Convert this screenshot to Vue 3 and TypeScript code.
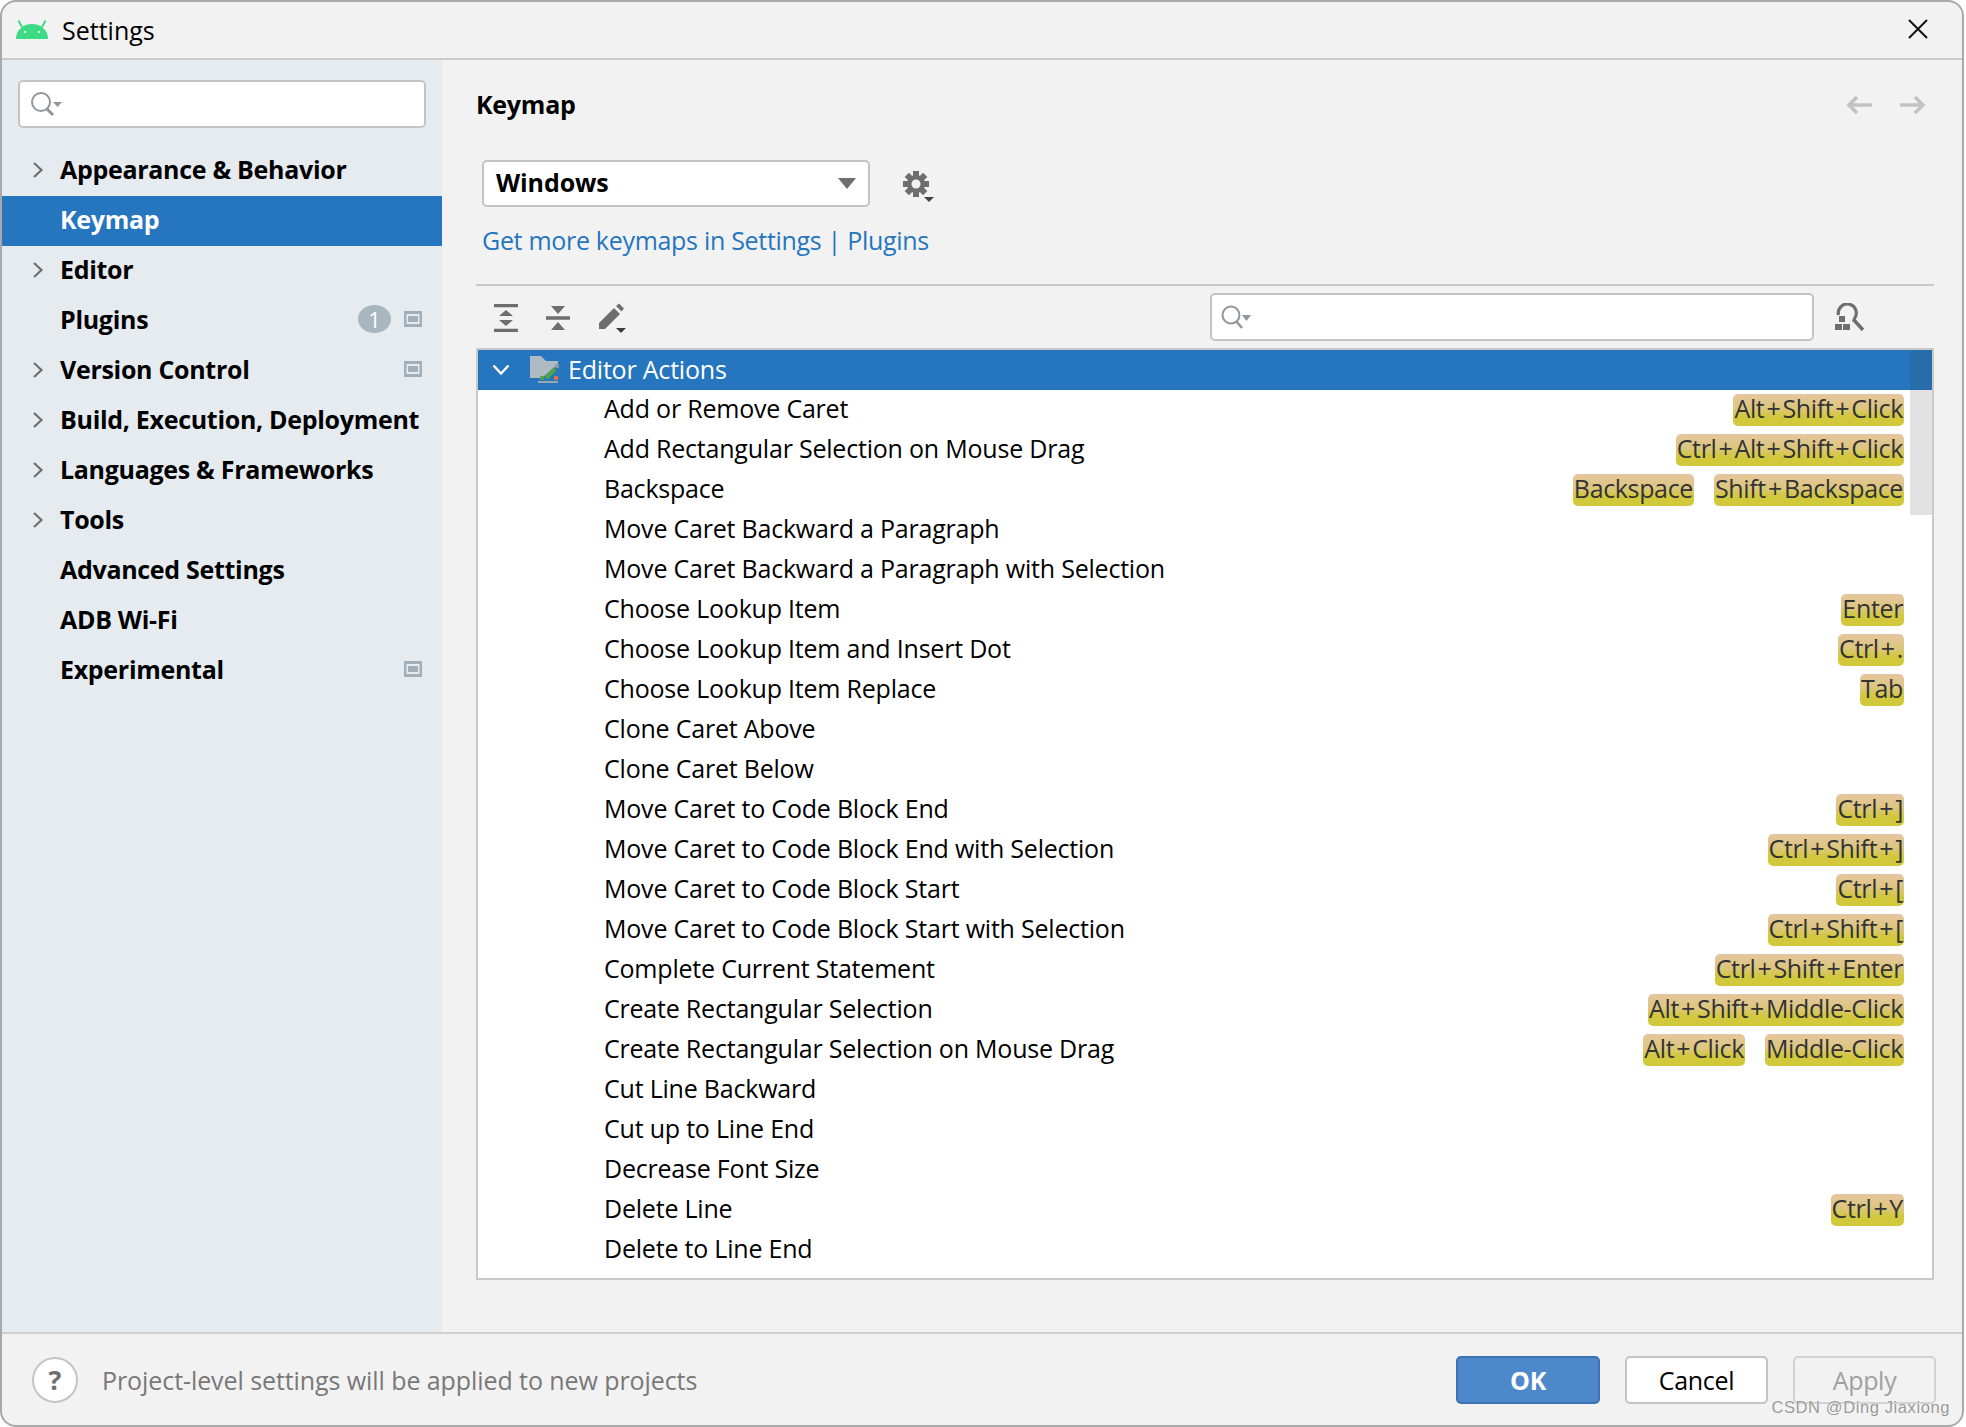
<script setup lang="ts">
interface Nav { label: string; arrow?: boolean; active?: boolean; badge?: boolean; proj?: boolean }
const nav: Nav[] = [
  { label: 'Appearance & Behavior', arrow: true },
  { label: 'Keymap', active: true },
  { label: 'Editor', arrow: true },
  { label: 'Plugins', badge: true, proj: true },
  { label: 'Version Control', arrow: true, proj: true },
  { label: 'Build, Execution, Deployment', arrow: true },
  { label: 'Languages & Frameworks', arrow: true },
  { label: 'Tools', arrow: true },
  { label: 'Advanced Settings' },
  { label: 'ADB Wi-Fi' },
  { label: 'Experimental', proj: true },
]
const rows: { name: string; keys: string[] }[] = [
  { name: 'Add or Remove Caret', keys: ['Alt+Shift+Click'] },
  { name: 'Add Rectangular Selection on Mouse Drag', keys: ['Ctrl+Alt+Shift+Click'] },
  { name: 'Backspace', keys: ['Backspace', 'Shift+Backspace'] },
  { name: 'Move Caret Backward a Paragraph', keys: [] },
  { name: 'Move Caret Backward a Paragraph with Selection', keys: [] },
  { name: 'Choose Lookup Item', keys: ['Enter'] },
  { name: 'Choose Lookup Item and Insert Dot', keys: ['Ctrl+.'] },
  { name: 'Choose Lookup Item Replace', keys: ['Tab'] },
  { name: 'Clone Caret Above', keys: [] },
  { name: 'Clone Caret Below', keys: [] },
  { name: 'Move Caret to Code Block End', keys: ['Ctrl+]'] },
  { name: 'Move Caret to Code Block End with Selection', keys: ['Ctrl+Shift+]'] },
  { name: 'Move Caret to Code Block Start', keys: ['Ctrl+['] },
  { name: 'Move Caret to Code Block Start with Selection', keys: ['Ctrl+Shift+['] },
  { name: 'Complete Current Statement', keys: ['Ctrl+Shift+Enter'] },
  { name: 'Create Rectangular Selection', keys: ['Alt+Shift+Middle-Click'] },
  { name: 'Create Rectangular Selection on Mouse Drag', keys: ['Alt+Click', 'Middle-Click'] },
  { name: 'Cut Line Backward', keys: [] },
  { name: 'Cut up to Line End', keys: [] },
  { name: 'Decrease Font Size', keys: [] },
  { name: 'Delete Line', keys: ['Ctrl+Y'] },
  { name: 'Delete to Line End', keys: [] },
]
const parts = (k: string): string[] => k.split(/(\+)/)
</script>

<template>
  <div class="window">
    <header class="titlebar">
      <svg class="android" width="32" height="22" viewBox="0 0 32 22">
        <path d="M0 21C0 12 7 6 16 6s16 6 16 15z" fill="#3ddc84" />
        <path d="M6 9 2.500 2.500M26 9l3.500-6.500" stroke="#3ddc84" stroke-width="2" fill="none" />
        <circle cx="9" cy="14" r="1.100" fill="#fff" />
        <circle cx="23" cy="14" r="1.100" fill="#fff" />
      </svg>
      <span class="title">Settings</span>
      <svg class="close" width="20" height="20" viewBox="0 0 20 20">
        <path d="M1 1l18 18M19 1 1 19" stroke="#111" stroke-width="2" fill="none" />
      </svg>
    </header>

    <div class="body">
      <aside class="sidebar">
        <div class="search side-search">
          <svg width="34" height="26" viewBox="0 0 34 26">
            <circle cx="12" cy="11" r="9" fill="none" stroke="#8f969c" stroke-width="2" />
            <path d="M18 18l6 6" stroke="#8f969c" stroke-width="3" />
            <path d="M24 11h9l-4.500 5z" fill="#8f969c" />
          </svg>
        </div>
        <ul class="nav">
          <li v-for="n in nav" :key="n.label" class="nav-row" :class="{ active: n.active }">
            <span class="nav-arrow">
              <svg v-if="n.arrow" width="12" height="18" viewBox="0 0 12 18">
                <path d="M2 2l7.500 7L2 16" stroke="#6e6e6e" stroke-width="2.200" fill="none" />
              </svg>
            </span>
            <span class="nav-label">{{ n.label }}</span>
            <span v-if="n.badge" class="badge">1</span>
            <svg v-if="n.proj" class="proj" width="18" height="16" viewBox="0 0 18 16">
              <rect width="18" height="16" fill="#a3afb8" />
              <rect x="2.500" y="3" width="13" height="10" fill="#e6ebf0" />
              <rect x="4" y="5" width="10" height="6" fill="#a3afb8" />
            </svg>
          </li>
        </ul>
      </aside>

      <main class="main">
        <div class="head">
          <h1 class="page-title">Keymap</h1>
          <div class="history">
            <svg width="26" height="20" viewBox="0 0 26 20">
              <path d="M26 10H3M11 2l-8 8 8 8" stroke="#c2c2c2" stroke-width="3.500" fill="none" />
            </svg>
            <svg width="26" height="20" viewBox="0 0 26 20">
              <path d="M0 10h23M15 2l8 8-8 8" stroke="#c2c2c2" stroke-width="3.500" fill="none" />
            </svg>
          </div>
        </div>

        <div class="scheme">
          <div class="combo">
            <span class="combo-text">Windows</span>
            <svg width="18" height="11" viewBox="0 0 18 11"><path d="M0 0h18l-9 11z" fill="#6e6e6e" /></svg>
          </div>
          <svg class="gear" width="32" height="32" viewBox="0 0 32 32">
            <g transform="translate(13 13)" fill="#6e6e6e">
              <circle r="9" />
              <rect x="-3" y="-13" width="6" height="26" />
              <rect x="-3" y="-13" width="6" height="26" transform="rotate(45)" />
              <rect x="-3" y="-13" width="6" height="26" transform="rotate(90)" />
              <rect x="-3" y="-13" width="6" height="26" transform="rotate(135)" />
              <circle r="4.500" fill="#f2f2f2" />
            </g>
            <path d="M21 26h10l-5 5z" fill="#444" />
          </svg>
        </div>
        <a class="link">Get more keymaps in Settings | Plugins</a>
        <div class="sep"></div>

        <div class="toolbar">
          <div class="tools">
            <svg width="24" height="28" viewBox="0 0 24 28">
              <path d="M0 1.500h24M0 26.500h24" stroke="#6e6e6e" stroke-width="3.500" />
              <path d="M12 6l7 6H5zM12 22l-7-6h14z" fill="#6e6e6e" />
            </svg>
            <svg width="24" height="28" viewBox="0 0 24 28">
              <path d="M0 14h24" stroke="#6e6e6e" stroke-width="3.500" />
              <path d="M12 10 5 2h14zM12 18l7 8H5z" fill="#6e6e6e" />
            </svg>
            <svg width="30" height="30" viewBox="0 0 30 30">
              <path d="M1 20 16 5l6 6L7 26H1zM18 3l3-2.500 5 5L23.500 8.500z" fill="#6e6e6e" />
              <path d="M18 25h10l-5 5z" fill="#3c3c3c" />
            </svg>
          </div>
          <div class="search find-search">
            <svg width="30" height="24" viewBox="0 0 30 24">
              <circle cx="10" cy="10" r="8.500" fill="none" stroke="#8f969c" stroke-width="2" />
              <path d="M15 16l6 7" stroke="#8f969c" stroke-width="2.600" />
              <path d="M21 10h9l-4.500 6z" fill="#8f969c" />
            </svg>
          </div>
          <svg class="find-shortcut" width="30" height="28" viewBox="0 0 30 28">
            <path d="M3.500 12A9 9 0 1 1 19 16" fill="none" stroke="#6e6e6e" stroke-width="3.200" />
            <path d="M18 16l10 11" stroke="#6e6e6e" stroke-width="3.500" />
            <path d="M4 13h6v6H4zM0 21h7v6H0zM8 21h7v6H8z" fill="#6e6e6e" />
          </svg>
        </div>

        <section class="tree">
          <div class="tree-head">
            <svg width="18" height="12" viewBox="0 0 18 12">
              <path d="M1.500 1.500 9 9.500l7.500-8" stroke="#fff" stroke-width="2.400" fill="none" />
            </svg>
            <svg class="folder" width="29" height="28" viewBox="0 0 29 28">
              <path d="M0 0h11l5 5h12v3L12 22H0z" fill="#aebac4" />
              <path d="M8 25h20v2H8z" fill="#9aa7b1" />
              <path d="M16 22 25 13" stroke="#4fa53e" stroke-width="4" />
              <circle cx="27" cy="10" r="2.200" fill="#8d9aa4" />
              <circle cx="12" cy="22" r="2.200" fill="#4fa53e" />
              <circle cx="26" cy="22" r="2.200" fill="#e8703a" />
            </svg>
            <span class="head-text">Editor Actions</span>
          </div>
          <div v-for="r in rows" :key="r.name" class="row">
            <span class="row-name">{{ r.name }}</span>
            <span class="keys">
              <span v-for="k in r.keys" :key="k" class="key"><template v-for="(p, i) in parts(k)" :key="i"><span v-if="p === '+'" class="plus">+</span><template v-else>{{ p }}</template></template></span>
            </span>
          </div>
          <div class="scrollbar"></div>
        </section>
      </main>
    </div>

    <footer class="footer">
      <span class="help">?</span>
      <span class="note">Project-level settings will be applied to new projects</span>
      <div class="buttons">
        <button class="btn ok">OK</button>
        <button class="btn">Cancel</button>
        <button class="btn disabled">Apply</button>
      </div>
      <span class="watermark">CSDN @Ding Jiaxiong</span>
    </footer>
  </div>
</template>

<style>
html, body { margin: 0; background: #fff; }
</style>

<style scoped>
.window {
  position: relative;
  box-sizing: border-box;
  width: 1964px;
  height: 1427px;
  display: flex;
  flex-direction: column;
  background: #f2f2f2;
  border: 2px solid #a9a9a9;
  border-radius: 16px;
  overflow: hidden;
  font-family: "Open Sans", "Noto Sans", sans-serif;
  font-size: 25px;
  color: #000;
}
.titlebar {
  position: relative;
  flex: none;
  height: 56px;
  display: flex;
  align-items: center;
  padding-left: 14px;
  border-bottom: 2px solid #cbcbcb;
  box-sizing: content-box;
}
.android { margin-top: -2px; }
.title { margin-left: 14px; letter-spacing: 0; }
.close { margin-left: auto; margin-right: 34px; margin-top: -2px; }

.body { flex: 1; min-height: 0; display: flex; }

.sidebar {
  flex: none;
  width: 440px;
  background: #e6ebf0;
  box-sizing: border-box;
  padding-top: 20px;
}
.search {
  box-sizing: border-box;
  display: flex;
  align-items: center;
  height: 48px;
  background: #fff;
  border: 2px solid #c4c4c4;
  border-radius: 5px;
}
.side-search { margin: 0 16px 0 16px; padding-left: 9px; }
.nav { list-style: none; margin: 18px 0 0; padding: 0; }
.nav-row {
  height: 50px;
  display: flex;
  align-items: center;
  padding-right: 20px;
  font-weight: 700;
  letter-spacing: -0.3px;
}
.nav-row.active { background: #2675bf; color: #fff; }
.nav-arrow { flex: none; width: 58px; padding-left: 30px; box-sizing: border-box; display: flex; margin-bottom: 3px; }
.nav-label { flex: 1; white-space: nowrap; padding-bottom: 5px; }
.badge {
  width: 33px;
  height: 28px;
  margin-bottom: 5px;
  border-radius: 50%;
  background: #a8b6bf;
  color: #fff;
  font-size: 22px;
  font-weight: 400;
  line-height: 28px;
  text-align: center;
}
.proj { margin: 0 0 5px 13px; }

.main {
  flex: 1;
  min-width: 0;
  box-sizing: border-box;
  padding: 28px 28px 0 34px;
}
.head { display: flex; align-items: center; height: 34px; }
.page-title { margin: 0 0 2px; font-size: 25px; font-weight: 700; letter-spacing: -0.25px; }
.history { margin-left: auto; display: flex; gap: 28px; padding-right: 8px; }
.scheme { display: flex; align-items: center; margin: 38px 0 0 6px; height: 47px; }
.combo {
  box-sizing: border-box;
  width: 388px;
  height: 47px;
  display: flex;
  align-items: center;
  justify-content: space-between;
  background: #fff;
  border: 2px solid #c4c4c4;
  border-radius: 5px;
  padding: 0 12px;
  font-weight: 700;
}
.combo-text { padding-bottom: 3px; letter-spacing: -0.1px; }
.gear { margin-left: 33px; margin-top: 6px; }
.link { display: block; margin: 17px 0 0 6px; line-height: 32px; color: #2675bf; letter-spacing: -0.3px; }
.sep { height: 2px; margin-top: 28px; background: #c9c9c9; }
.toolbar { display: flex; align-items: center; height: 62px; }
.tools { display: flex; align-items: center; gap: 28px; padding: 2px 0 0 18px; width: 734px; box-sizing: border-box; }
.find-search { width: 604px; padding-left: 9px; }
.find-shortcut { margin: 0 0 0 21px; }

.tree {
  position: relative;
  box-sizing: border-box;
  height: 932px;
  background: #fff;
  border: 2px solid #c9c9c9;
  overflow: hidden;
}
.tree-head {
  height: 40px;
  display: flex;
  align-items: center;
  background: #2675bf;
  color: #fff;
  padding-left: 14px;
}
.head-text { padding-bottom: 3px; letter-spacing: -0.2px; }
.folder { margin: 0 9px 0 20px; }
.row {
  height: 40px;
  display: flex;
  align-items: center;
  justify-content: space-between;
  padding: 0 28px 0 126px;
}
.row-name { letter-spacing: -0.21px; white-space: nowrap; padding-bottom: 4px; }
.keys { display: flex; gap: 20px; }
.key {
  height: 32px;
  line-height: 29px;
  padding: 0 1px;
  border-radius: 5px;
  background: linear-gradient(#e6c6a0, #dcc67c 45%, #d1c83c 70%);
  color: #333;
  letter-spacing: -0.35px;
  white-space: nowrap;
}
.plus { margin: 0 2px; }
.scrollbar { position: absolute; right: 0; top: 0; width: 22px; height: 165px; background: rgba(60, 60, 60, 0.15); }

.footer {
  position: relative;
  flex: none;
  height: 91px;
  display: flex;
  align-items: center;
  border-top: 2px solid #cfcfcf;
  padding-left: 30px;
}
.help {
  box-sizing: border-box;
  width: 46px;
  height: 46px;
  border-radius: 50%;
  border: 2px solid #c4c4c4;
  background: #fff;
  color: #6e6e6e;
  font-weight: 700;
  font-size: 27px;
  line-height: 41px;
  text-align: center;
}
.note { margin-left: 24px; color: #787878; letter-spacing: -0.08px; }
.buttons { margin-left: auto; display: flex; gap: 25px; padding-right: 26px; }
.btn {
  box-sizing: border-box;
  width: 143px;
  height: 48px;
  background: #fff;
  border: 2px solid #c4c4c4;
  border-radius: 5px;
  font: inherit;
  letter-spacing: -0.3px;
  color: #000;
  padding: 0;
}
.btn.ok { width: 144px; background: #4d88ca; border-color: #3d72b4; color: #fff; font-weight: 700; }
.btn.disabled { background: #f2f2f2; border-color: #d2d2d2; color: #a0a0a0; }
.watermark {
  position: absolute;
  right: 12px;
  bottom: 8px;
  font-family: "Liberation Sans", sans-serif;
  font-size: 16.500px;
  color: #999;
  letter-spacing: 0.6px;
  text-shadow: 0 0 1px #fff;
}
</style>
